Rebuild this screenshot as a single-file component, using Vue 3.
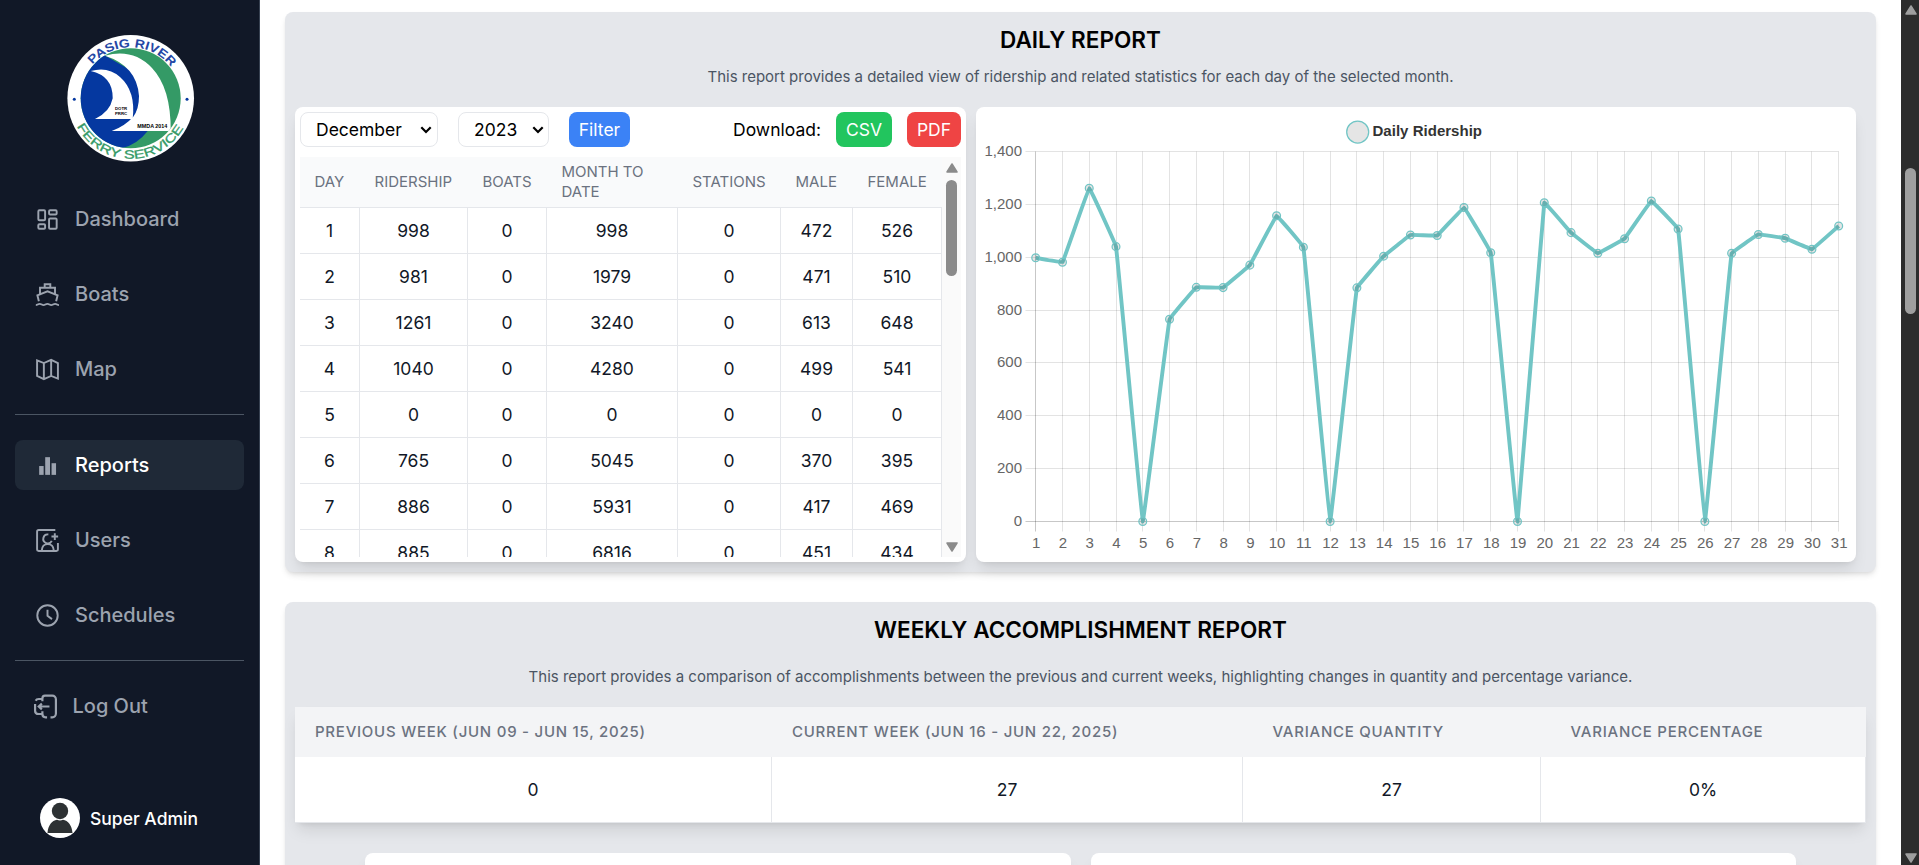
<script setup>
const mainNav = [
  { label: 'Dashboard', icon: 'dashboard' },
  { label: 'Boats', icon: 'boat' },
  { label: 'Map', icon: 'map' },
]
const adminNav = [
  { label: 'Reports', icon: 'reports', active: true },
  { label: 'Users', icon: 'users' },
  { label: 'Schedules', icon: 'clock' },
]

const columns = ['Day', 'Ridership', 'Boats', 'Month to Date', 'Stations', 'Male', 'Female']
const rows = [
  [1, 998, 0, 998, 0, 472, 526],
  [2, 981, 0, 1979, 0, 471, 510],
  [3, 1261, 0, 3240, 0, 613, 648],
  [4, 1040, 0, 4280, 0, 499, 541],
  [5, 0, 0, 0, 0, 0, 0],
  [6, 765, 0, 5045, 0, 370, 395],
  [7, 886, 0, 5931, 0, 417, 469],
  [8, 885, 0, 6816, 0, 451, 434],
]

const weekly = [
  { head: 'Previous Week (Jun 09 - Jun 15, 2025)', value: '0' },
  { head: 'Current Week (Jun 16 - Jun 22, 2025)', value: '27' },
  { head: 'Variance Quantity', value: '27', wide: true },
  { head: 'Variance Percentage', value: '0%', wide: true },
]

/* Chart geometry, in svg units */
const ridership = [
  998, 981, 1261, 1040, 0, 765, 886, 885, 970, 1157, 1038, 0, 884, 1004, 1084, 1082,
  1188, 1017, 0, 1206, 1093, 1015, 1070, 1213, 1107, 0, 1015, 1086, 1072, 1030, 1118,
]
const left = 59.7
const right = 862.7
const top = 44.5
const bottom = 414.5
const maxValue = 1400
const tension = 0.035
const px = (i) => left + ((right - left) * i) / 30
const py = (v) => bottom - ((bottom - top) * v) / maxValue
const snap = (n) => Math.floor(n) + 0.5

const points = ridership.map((v, i) => ({ x: px(i), y: py(v) }))
const xTicks = points.map((p, i) => ({ x: snap(p.x), tx: p.x, label: i + 1 }))
const yTicks = [1400, 1200, 1000, 800, 600, 400, 200, 0].map((v) => ({
  y: snap(py(v)),
  label: v.toLocaleString('en-US'),
  zero: v === 0,
}))

const clampY = (y) => Math.max(top, Math.min(bottom, y))
function controls(i) {
  const p = points[i]
  const a = points[i - 1] || p
  const b = points[i + 1] || p
  const d1 = Math.hypot(p.x - a.x, p.y - a.y)
  const d2 = Math.hypot(b.x - p.x, b.y - p.y)
  const f1 = (tension * d1) / (d1 + d2)
  const f2 = (tension * d2) / (d1 + d2)
  return {
    before: [p.x - f1 * (b.x - a.x), clampY(p.y - f1 * (b.y - a.y))],
    after: [p.x + f2 * (b.x - a.x), clampY(p.y + f2 * (b.y - a.y))],
  }
}
const linePath = points
  .map((p, i) => {
    if (i === 0) return `M${p.x},${p.y}`
    return `C${controls(i - 1).after} ${controls(i).before} ${p.x},${p.y}`
  })
  .join(' ')
</script>

<template>
  <div class="app">
    <aside class="sidebar">
      <svg class="logo" viewBox="0 0 128 128">
        <defs>
          <clipPath id="disc"><circle cx="63.700" cy="64.300" r="50" /></clipPath>
          <path id="arcTop" d="M12.700 64.300A51 51 0 0 1 114.700 64.300" />
          <path id="arcBottom" d="M3.200 64.300A60.500 60.500 0 0 0 124.200 64.300" />
        </defs>
        <circle cx="63.700" cy="64.300" r="63.300" fill="#fff" />
        <g clip-path="url(#disc)">
          <rect x="12" y="12" width="104" height="104" fill="#349a66" />
          <path d="M12 12L38 21.500L70 40L80.700 97Q70 111 54 114.500L40 118H12Z" fill="#0538a0" />
          <path d="M38 21.700Q66 14 85 34Q104 54 103.700 97H44.700Q58 92 66.300 82.700Q72 75 72 62Q70 32 38 21.700Z" fill="#fff" />
          <path d="M23.700 37Q41 32 53 43Q69 57 65.700 85H28Q43 78 45.700 64.300Q46 42 23.700 37Z" fill="#fff" />
        </g>
        <circle cx="7.300" cy="65.300" r="1.500" fill="#0538a0" />
        <circle cx="120" cy="65.300" r="1.500" fill="#0538a0" />
        <text class="logo-top"><textPath href="#arcTop" startOffset="51%" text-anchor="middle" textLength="90" lengthAdjust="spacingAndGlyphs">PASIG RIVER</textPath></text>
        <text class="logo-bottom"><textPath href="#arcBottom" startOffset="49.500%" text-anchor="middle" textLength="130" lengthAdjust="spacingAndGlyphs">FERRY SERVICE</textPath></text>
        <text class="logo-tiny" x="48" y="75.500">DOTR</text>
        <text class="logo-tiny" x="48" y="80.500">PRRC</text>
        <text class="logo-small" x="70.300" y="93.700" textLength="30" lengthAdjust="spacingAndGlyphs">MMDA 2014</text>
      </svg>

      <nav class="nav">
        <a v-for="item in mainNav" :key="item.label" class="item">
          <svg v-if="item.icon === 'dashboard'" class="icon" viewBox="0 0 24 24">
            <rect x="3.200" y="3.200" width="6.500" height="9.600" rx="1" />
            <rect x="13.500" y="3.200" width="7.300" height="4" rx="1" />
            <rect x="3.200" y="16.500" width="6.500" height="4.300" rx="1" />
            <rect x="13.500" y="11" width="7.300" height="9.800" rx="1" />
          </svg>
          <svg v-else-if="item.icon === 'boat'" class="icon" viewBox="0 0 24 24">
            <path d="M.8 22.200c1.500 0 2-1.200 3.700-1.200s2.200 1.200 3.700 1.200 2-1.200 3.700-1.200 2.200 1.200 3.700 1.200 2-1.200 3.700-1.200 2 1.200 3.700 1.200" />
            <path d="M3.700 18.500L2.300 12.800 12 9l9.700 3.800-1.400 5.700" />
            <path d="M4.800 11.500V5.500h14.400v6M9.300 5.500V2.200h5.400v3.300" />
          </svg>
          <svg v-else class="icon" viewBox="0 0 24 24">
            <path d="M2 3.200l6.500 2.600 7-3 6.500 3v15l-6.500-2.600-7 3-6.500-3zM8.500 5.800v15.400M15.500 2.800v15.400" />
          </svg>
          <span>{{ item.label }}</span>
        </a>
      </nav>
      <hr class="rule" />
      <nav class="nav nav-admin">
        <a v-for="item in adminNav" :key="item.label" class="item" :class="{ active: item.active }">
          <svg v-if="item.icon === 'reports'" class="icon solid" viewBox="0 0 24 24">
            <rect x="4" y="12.500" width="4.300" height="8.500" />
            <rect x="9.800" y="4" width="4.600" height="17" />
            <rect x="15.900" y="9.800" width="4.300" height="11.200" />
          </svg>
          <svg v-else-if="item.icon === 'users'" class="icon" viewBox="0 0 24 24">
            <path d="M19.500 2H3.500A1.500 1.500 0 0 0 2 3.500v17A1.500 1.500 0 0 0 3.500 22h17a1.500 1.500 0 0 0 1.500-1.500V14.500" />
            <path d="M12.800 6.200a4.300 4.300 0 1 0 3.300 6.200M6.500 21.500c.3-3.800 2.500-6 5.700-6s5.500 2.200 5.800 6" />
            <path d="M19 5v6.400M15.800 8.200h6.400" />
          </svg>
          <svg v-else class="icon" viewBox="0 0 24 24">
            <circle cx="12" cy="12" r="9.800" />
            <path d="M12 6.500V12.300l4.300 3.200" />
          </svg>
          <span>{{ item.label }}</span>
        </a>
      </nav>
      <hr class="rule" />
      <a class="item logout">
        <svg class="icon heavy" viewBox="0 0 24 24">
          <path d="M9 7V4.500C9 3 10 1.600 11.500 1.600H18.500C20.500 1.600 22 3.200 22 5.200V18.800C22 20.800 20.500 22.400 18.500 22.400H16.800M13.500 22.400H12C10 22.400 9 21 9 19V16.500" />
          <path d="M9 4.800H5.500C4 4.800 3 5.500 2.600 6.500M2 9.500V16C2 18 3.200 19.200 5.500 19.200H9" />
          <path d="M15.800 12H5.500M8.500 9.200L5.500 12l3 2.800" />
        </svg>
        <span>Log Out</span>
      </a>
      <div class="profile">
        <svg class="avatar" viewBox="0 0 40 40">
          <circle cx="20" cy="20" r="20" fill="#fff" />
          <circle cx="20" cy="13" r="8.200" fill="#2d3133" />
          <path d="M7.500 35C8 27.500 12 22.500 17 21.800Q20 23.200 23 21.800C28 22.500 32 27.500 32.500 35Z" fill="#2d3133" />
        </svg>
        <span>Super Admin</span>
      </div>
    </aside>

    <main class="content">
      <section class="panel daily">
        <h2 class="title">DAILY REPORT</h2>
        <p class="subtitle">This report provides a detailed view of ridership and related statistics for each day of the selected month.</p>
        <div class="split">
          <div class="card table-card">
            <div class="toolbar">
              <div class="select month">
                <span>December</span>
                <svg class="chevron" viewBox="0 0 12 8"><path d="M1.300 1.300L6 6 10.700 1.300" /></svg>
              </div>
              <div class="select year">
                <span>2023</span>
                <svg class="chevron" viewBox="0 0 12 8"><path d="M1.300 1.300L6 6 10.700 1.300" /></svg>
              </div>
              <button class="btn blue">Filter</button>
              <span class="download">Download:</span>
              <button class="btn green">CSV</button>
              <button class="btn red">PDF</button>
            </div>
            <div class="scroller">
              <table class="days">
                <colgroup>
                  <col class="c1" /><col class="c2" /><col class="c3" /><col class="c4" /><col class="c5" /><col class="c6" /><col class="c7" />
                </colgroup>
                <thead>
                  <tr><th v-for="c in columns" :key="c">{{ c }}</th></tr>
                </thead>
                <tbody>
                  <tr v-for="r in rows" :key="r[0]">
                    <td v-for="(v, i) in r" :key="i">{{ v }}</td>
                  </tr>
                </tbody>
              </table>
              <div class="bar inner-bar">
                <svg class="arrow" viewBox="0 0 12 10"><path d="M6 1L11 9H1Z" /></svg>
                <div class="thumb"></div>
                <svg class="arrow last" viewBox="0 0 12 10"><path d="M6 9L11 1H1Z" /></svg>
              </div>
            </div>
          </div>

          <div class="card chart-card">
            <svg class="chart" viewBox="0 0 880 455">
              <circle cx="381.700" cy="25" r="11" class="legend-dot" />
              <text x="396.500" y="29" class="legend" textLength="109.500">Daily Ridership</text>
              <g class="grid">
                <line v-for="t in xTicks" :key="t.label" :x1="t.x" :x2="t.x" :y1="top" y2="424.500" :class="{ zero: t.label === 1 }" />
                <line v-for="t in yTicks" :key="t.label" x1="49.500" :x2="right" :y1="t.y" :y2="t.y" :class="{ zero: t.zero }" />
              </g>
              <path :d="linePath" class="line" />
              <circle v-for="p in points" :key="p.x" :cx="p.x" :cy="p.y" r="3.900" class="dot" />
              <g class="labels">
                <text v-for="t in yTicks" :key="t.label" x="46" :y="t.y + 4.500" text-anchor="end">{{ t.label }}</text>
                <text v-for="t in xTicks" :key="t.label" :x="t.tx + 0.500" y="441" text-anchor="middle">{{ t.label }}</text>
              </g>
            </svg>
          </div>
        </div>
      </section>

      <section class="panel weekly">
        <h2 class="title">WEEKLY ACCOMPLISHMENT REPORT</h2>
        <p class="subtitle">This report provides a comparison of accomplishments between the previous and current weeks, highlighting changes in quantity and percentage variance.</p>
        <div class="weeks">
          <div v-for="w in weekly" :key="w.head" class="week">
            <div class="week-head" :class="{ wide: w.wide }">{{ w.head }}</div>
            <div class="week-value">{{ w.value }}</div>
          </div>
        </div>
        <div class="lower">
          <div class="card"></div>
          <div class="card"></div>
        </div>
      </section>
    </main>

    <div class="bar page-bar">
      <svg class="arrow" viewBox="0 0 12 10"><path d="M6 1L11 9H1Z" /></svg>
      <div class="thumb"></div>
      <svg class="arrow last" viewBox="0 0 12 10"><path d="M6 9L11 1H1Z" /></svg>
    </div>
  </div>
</template>

<style>
body {
  margin: 0;
  overflow: hidden;
}
</style>

<style scoped>
* {
  box-sizing: border-box;
}
.app {
  display: flex;
  width: 1919px;
  height: 865px;
  overflow: hidden;
  background: #fff;
  color: #000;
  font: 17.500px/25px Inter, sans-serif;
}

/* Sidebar */
.sidebar {
  display: flex;
  flex-direction: column;
  flex: none;
  width: 260px;
  padding: 34px 15px 0;
  background: #111827;
  border-right: 1px solid #374151;
}
.logo {
  width: 128px;
  height: 128px;
  margin: 0 0 32px 52px;
  flex: none;
}
.logo text {
  font-family: "Liberation Sans", Arial, sans-serif;
}
.logo .logo-top {
  font-size: 12px;
  font-weight: 700;
  fill: #2447a5;
}
.logo .logo-bottom {
  font-size: 12px;
  fill: #349a66;
  stroke: #349a66;
  stroke-width: 0.300px;
}
.logo .logo-tiny {
  font-size: 4.300px;
  font-weight: 700;
}
.logo .logo-small {
  font-size: 5.600px;
  font-weight: 700;
}
.nav {
  display: flex;
  flex-direction: column;
  gap: 25px;
}
.item {
  display: flex;
  align-items: center;
  flex: none;
  gap: 15px;
  height: 50px;
  padding-left: 20px;
  border-radius: 8px;
  color: #9ca3af;
  font-size: 20px;
  line-height: 28px;
  font-weight: 500;
}
.item.active {
  background: #1f2937;
  color: #fff;
}
.icon {
  width: 25px;
  height: 25px;
  fill: none;
  stroke: #9ca3af;
  stroke-width: 1.850;
}
.icon.heavy {
  stroke-width: 2.100;
}
.icon.solid {
  fill: #9ca3af;
  stroke: none;
}
.rule {
  width: 229px;
  height: 1px;
  margin: 20px 0 0;
  border: 0;
  background: #4b5563;
}
.nav-admin {
  margin-top: 25px;
}
.logout {
  margin-top: 20px;
  padding-left: 18px;
  gap: 14.500px;
}
.profile {
  display: flex;
  align-items: center;
  gap: 10px;
  margin: 67px 0 0 25px;
  color: #fff;
  font-weight: 500;
}
.avatar {
  width: 40px;
  height: 40px;
}

/* Panels */
.content {
  flex: 1;
  min-width: 0;
  padding: 12px 25px 0;
  overflow: hidden;
}
.panel {
  padding: 0 10px;
  border-radius: 8px;
  background: #e5e7eb;
  box-shadow: 0 4px 6px -1px rgba(0, 0, 0, 0.1), 0 2px 4px -2px rgba(0, 0, 0, 0.1);
}
.daily {
  height: 560px;
}
.weekly {
  height: 420px;
  margin-top: 30px;
}
.title {
  margin: 0;
  padding-top: 14px;
  text-align: center;
  font-size: 22.550px;
  line-height: 28px;
  font-weight: 600;
}
.subtitle {
  margin: 0;
  text-align: center;
  color: #4b5563;
  font-size: 15px;
  line-height: 20px;
}
.daily .subtitle {
  padding: 13px 0 20px;
}
.weekly .subtitle {
  padding: 23px 0 20px;
}
.card {
  border-radius: 8px;
  background: #fff;
  box-shadow: 0 10px 15px -3px rgba(0, 0, 0, 0.1), 0 4px 6px -4px rgba(0, 0, 0, 0.1);
}
.split {
  display: flex;
  gap: 10px;
}
.table-card {
  width: 671px;
  height: 455px;
  padding: 5px;
}
.chart-card {
  width: 880px;
  height: 455px;
}

/* Toolbar */
.toolbar {
  display: flex;
  align-items: center;
  height: 35px;
}
.select {
  display: flex;
  align-items: center;
  justify-content: space-between;
  height: 35px;
  padding: 0 5px 0 15px;
  border: 1px solid #e5e7eb;
  border-radius: 8px;
}
.month {
  width: 138px;
}
.year {
  width: 91px;
  margin: 0 20px;
  padding-right: 4px;
}
.chevron {
  width: 12px;
  height: 8px;
  fill: none;
  stroke: #000;
  stroke-width: 2.200;
}
.btn {
  height: 35px;
  padding: 0;
  border: 0;
  border-radius: 8px;
  color: #fff;
  font: inherit;
}
.blue {
  width: 61px;
  background: #3b82f6;
}
.green {
  width: 56px;
  margin: 0 15px;
  background: #22c55e;
}
.red {
  width: 54px;
  background: #ef4444;
}
.download {
  margin-left: auto;
}

/* Daily table */
.scroller {
  display: flex;
  height: 400px;
  margin-top: 10px;
  overflow: hidden;
}
.days {
  width: 642px;
  flex: none;
  align-self: flex-start;
  table-layout: fixed;
  border-collapse: separate;
  border-spacing: 0;
}
.c1 { width: 60px; }
.c2 { width: 108px; }
.c3 { width: 79px; }
.c4 { width: 131px; }
.c5 { width: 103px; }
.c6 { width: 72px; }
.c7 { width: 89px; }
.days th {
  height: 51px;
  padding: 0 10px 0 14.500px;
  border-bottom: 1px solid #e5e7eb;
  background: #f9fafb;
  color: #6b7280;
  text-align: left;
  text-transform: uppercase;
  font-size: 15px;
  line-height: 20px;
  font-weight: 400;
}
.days th:nth-child(4) {
  padding-right: 15px;
}
.days td {
  height: 46px;
  padding: 0;
  border-right: 1px solid #e5e7eb;
  border-bottom: 1px solid #e5e7eb;
  color: #111827;
  text-align: center;
}

/* Scrollbars */
.bar {
  display: flex;
  flex-direction: column;
  align-items: center;
}
.arrow {
  width: 12px;
  height: 10px;
  flex: none;
  stroke-width: 1.500;
  stroke-linejoin: round;
}
.last {
  margin-top: auto;
}
.inner-bar {
  width: 19px;
  padding: 6px 0 5px;
  background: #fafafa;
  color: #8b8b8b;
}
.inner-bar .thumb {
  height: 96px;
  margin-top: 7px;
}
.thumb {
  width: 11px;
  border-radius: 6px;
  background: currentColor;
}
.arrow path {
  fill: currentColor;
  stroke: currentColor;
}
.page-bar {
  width: 18px;
  flex: none;
  padding: 5px 0 2px 1px;
  background: #2c2c2c;
  color: #9f9f9f;
}
.page-bar .thumb {
  height: 146px;
  margin-top: 153px;
}

/* Chart */
.chart {
  display: block;
  width: 880px;
  height: 455px;
  font-family: "Liberation Sans", Arial, sans-serif;
  font-size: 15px;
}
.grid line {
  stroke: rgba(0, 0, 0, 0.11);
}
.grid .zero {
  stroke: rgba(0, 0, 0, 0.22);
}
.line {
  fill: none;
  stroke: #71c5c5;
  stroke-width: 3.900;
}
.dot {
  fill: rgba(0, 0, 0, 0.1);
  stroke: #71c5c5;
  stroke-width: 1.250;
}
.legend-dot {
  fill: #e5e5e5;
  stroke: #71c5c5;
  stroke-width: 1.250;
}
.legend {
  fill: #333;
  font-weight: 700;
}
.labels text {
  fill: #666;
}

/* Weekly table */
.weeks {
  display: grid;
  grid-template-columns: 477px 471px 298px 325px;
  background: #fff;
  box-shadow: 0 10px 15px -3px rgba(0, 0, 0, 0.1), 0 4px 6px -4px rgba(0, 0, 0, 0.1);
}
.week-head {
  height: 50px;
  padding-left: 20px;
  background: #f3f4f6;
  color: #6b7280;
  font-size: 15px;
  line-height: 50px;
  font-weight: 500;
  letter-spacing: 0.750px;
  text-transform: uppercase;
  white-space: nowrap;
}
.week-head.wide {
  padding-left: 29.500px;
}
.week-value {
  height: 66px;
  border-right: 1px solid #e5e7eb;
  border-bottom: 1px solid #e5e7eb;
  color: #111827;
  text-align: center;
  line-height: 66px;
}
.lower {
  display: flex;
  gap: 20px;
  margin: 30px 70px 0;
}
.lower .card {
  flex: 1;
  height: 200px;
}
</style>
